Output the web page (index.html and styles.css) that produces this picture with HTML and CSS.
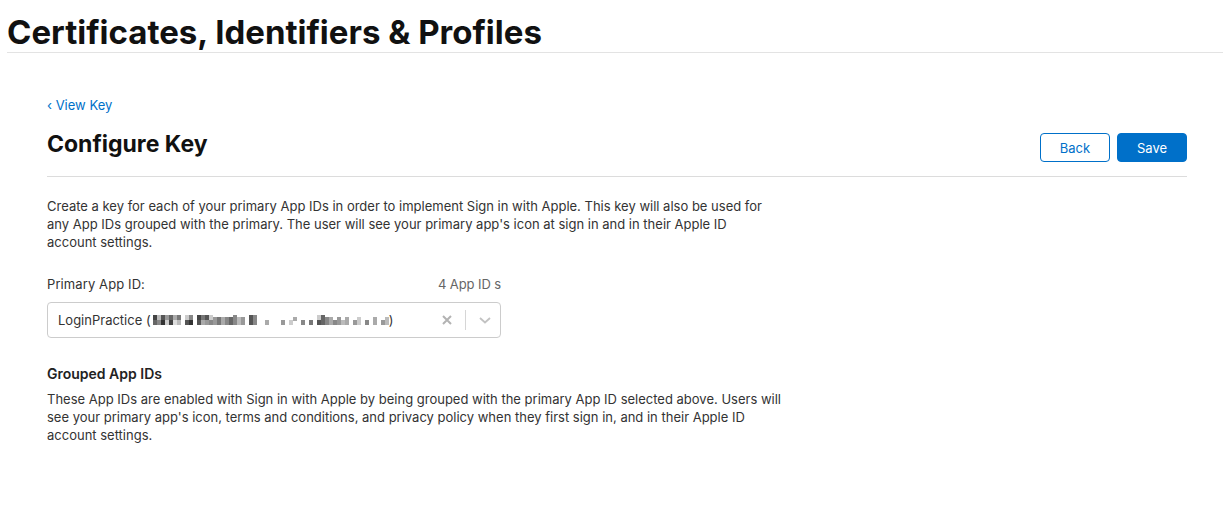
FILE: index.html
```html
<!DOCTYPE html>
<html lang="en">
<head>
<meta charset="utf-8">
<title>Configure Key</title>
<link rel="stylesheet" href="styles.css">
</head>
<body>
<header class="topbar">
  <h1 class="site-title">Certificates, Identifiers &amp; Profiles</h1>
</header>
<main class="main">
  <a class="crumb" href="#">&lsaquo; View Key</a>
  <div class="title-row">
    <h2 class="page-title">Configure Key</h2>
    <div class="actions">
      <button class="btn btn-outline">Back</button>
      <button class="btn btn-primary">Save</button>
    </div>
  </div>
  <section class="content">
    <p class="desc">Create a key for each of your primary App IDs in order to implement Sign in with Apple. This key will also be used for any App IDs grouped with the primary. The user will see your primary app's icon at sign in and in their Apple ID account settings.</p>
    <div class="field">
      <div class="field-head">
        <label class="field-label">Primary App ID:</label>
        <span class="field-count">4 App ID s</span>
      </div>
      <div class="select">
        <span class="select-value">LoginPractice (<svg class="mosaic" width="236" height="12" viewBox="0 0 236 12">
          <rect x="0" y="1" width="4" height="5" fill="#444"/><rect x="0" y="6" width="4" height="5" fill="#666"/>
          <rect x="4" y="1" width="4" height="5" fill="#bbb"/><rect x="4" y="6" width="4" height="5" fill="#888"/>
          <rect x="8" y="1" width="4" height="5" fill="#555"/><rect x="8" y="6" width="4" height="5" fill="#333"/>
          <rect x="12" y="1" width="4" height="5" fill="#999"/><rect x="12" y="6" width="4" height="5" fill="#ccc"/>
          <rect x="16" y="1" width="4" height="5" fill="#666"/><rect x="16" y="6" width="4" height="5" fill="#444"/>
          <rect x="20" y="1" width="4" height="5" fill="#aaa"/><rect x="20" y="6" width="4" height="5" fill="#ddd"/>
          <rect x="24" y="1" width="4" height="5" fill="#777"/><rect x="24" y="6" width="4" height="5" fill="#bbb"/>
          <rect x="32" y="1" width="4" height="5" fill="#ccc"/><rect x="32" y="6" width="4" height="5" fill="#555"/>
          <rect x="36" y="1" width="4" height="5" fill="#888"/><rect x="36" y="6" width="4" height="5" fill="#333"/>
          <rect x="44" y="1" width="4" height="5" fill="#444"/><rect x="44" y="6" width="4" height="5" fill="#555"/>
          <rect x="48" y="1" width="4" height="5" fill="#777"/><rect x="48" y="6" width="4" height="5" fill="#aaa"/>
          <rect x="52" y="1" width="4" height="5" fill="#555"/><rect x="52" y="6" width="4" height="5" fill="#999"/>
          <rect x="56" y="1" width="4" height="5" fill="#ccc"/><rect x="56" y="6" width="4" height="5" fill="#888"/>
          <rect x="60" y="3" width="4" height="8" fill="#999"/><rect x="64" y="3" width="4" height="8" fill="#777"/>
          <rect x="68" y="3" width="4" height="8" fill="#aaa"/><rect x="72" y="3" width="4" height="8" fill="#888"/>
          <rect x="76" y="3" width="4" height="8" fill="#666"/><rect x="80" y="1" width="4" height="10" fill="#888"/>
          <rect x="84" y="3" width="4" height="8" fill="#bbb"/><rect x="88" y="3" width="4" height="8" fill="#999"/>
          <rect x="96" y="1" width="4" height="10" fill="#555"/><rect x="100" y="1" width="4" height="10" fill="#888"/>
          <rect x="112" y="6" width="4" height="5" fill="#aaa"/>
          <rect x="128" y="6" width="4" height="5" fill="#999"/><rect x="140" y="3" width="4" height="4" fill="#aaa"/>
          <rect x="136" y="6" width="4" height="5" fill="#ccc"/><rect x="148" y="6" width="4" height="5" fill="#888"/>
          <rect x="156" y="6" width="4" height="5" fill="#777"/><rect x="164" y="1" width="4" height="5" fill="#ccc"/>
          <rect x="164" y="6" width="4" height="5" fill="#555"/><rect x="168" y="1" width="4" height="10" fill="#666"/>
          <rect x="172" y="3" width="4" height="8" fill="#888"/><rect x="176" y="3" width="4" height="8" fill="#aaa"/>
          <rect x="180" y="6" width="4" height="5" fill="#888"/><rect x="184" y="3" width="4" height="8" fill="#999"/>
          <rect x="188" y="6" width="4" height="5" fill="#bbb"/><rect x="192" y="3" width="4" height="8" fill="#aaa"/>
          <rect x="200" y="6" width="4" height="5" fill="#999"/><rect x="204" y="3" width="4" height="8" fill="#ccc"/>
          <rect x="212" y="6" width="4" height="5" fill="#888"/><rect x="220" y="3" width="4" height="8" fill="#aaa"/>
          <rect x="228" y="6" width="4" height="5" fill="#999"/><rect x="232" y="3" width="4" height="8" fill="#bbb"/>
        </svg>)</span>
        <span class="select-controls">
          <svg class="clear" width="12" height="12" viewBox="0 0 12 12"><path d="M2 2 L10 10 M10 2 L2 10" stroke="#b3b3b3" stroke-width="2" fill="none"/></svg>
          <span class="sep"></span>
          <svg class="chev" width="14" height="10" viewBox="0 0 14 10"><path d="M2 3 L7 7.5 L12 3" stroke="#c2c2c2" stroke-width="1.8" fill="none"/></svg>
        </span>
      </div>
    </div>
    <h3 class="sub-title">Grouped App IDs</h3>
    <p class="desc desc-wide">These App IDs are enabled with Sign in with Apple by being grouped with the primary App ID selected above. Users will see your primary app's icon, terms and conditions, and privacy policy when they first sign in, and in their Apple ID account settings.</p>
  </section>
</main>
</body>
</html>
```

FILE: styles.css
```css
* { box-sizing: border-box; }
body {
  margin: 0;
  font-family: Inter, "Noto Sans", sans-serif;
  color: #1d1d1f;
  background: #fff;
}
.topbar {
  margin-left: 7px;
  border-bottom: 1px solid #e3e3e3;
  padding-top: 12px;
  height: 53px;
}
.site-title {
  margin: 0;
  font-size: 33px;
  line-height: 40px;
  font-weight: 700;
  letter-spacing: 0;
  color: #111;
}
.main {
  padding: 43px 36px 0 47px;
}
.crumb {
  display: block;
  width: max-content;
  color: #0070c9;
  text-decoration: none;
  font-size: 13px;
  line-height: 18px;
}
.title-row {
  display: flex;
  justify-content: space-between;
  align-items: flex-start;
  border-bottom: 1px solid #dcdcdc;
  padding: 15px 0 14px;
}
.page-title {
  margin: 0;
  font-size: 23px;
  line-height: 30px;
  font-weight: 700;
  color: #111;
}
.actions {
  display: flex;
  gap: 7px;
  margin-top: 4px;
}
.btn {
  width: 70px;
  height: 29px;
  border-radius: 4px;
  font-family: inherit;
  font-size: 13px;
  border: 1px solid #0070c9;
  cursor: pointer;
}
.btn-outline { background: #fff; color: #0070c9; }
.btn-primary { background: #0070c9; color: #fff; }
.content {
  padding-top: 20px;
  max-width: 730px;
}
.desc {
  margin: 0;
  font-size: 13px;
  line-height: 18px;
  letter-spacing: 0;
  color: #333;
}
.desc-wide {
  width: 742px;
}
.field {
  width: 454px;
  margin-top: 24px;
}
.field-head {
  display: flex;
  justify-content: space-between;
  align-items: baseline;
  font-size: 13px;
  line-height: 18px;
  letter-spacing: 0.1px;
  margin-bottom: 9px;
}
.field-label { color: #333; }
.field-count { color: #666; letter-spacing: -0.1px; }
.select {
  display: flex;
  align-items: center;
  justify-content: space-between;
  height: 36px;
  border: 1px solid #cccccc;
  border-radius: 4px;
  padding: 0 8px 0 10px;
  font-size: 13px;
  color: #333;
}
.select-value { display: flex; align-items: center; }
.mosaic { margin: 0 0 0 2px; }
.select-controls {
  display: flex;
  align-items: center;
  gap: 12px;
}
.sep {
  width: 1px;
  height: 20px;
  background: #d6d6d6;
}
.sub-title {
  margin: 26px 0 6px;
  font-size: 14px;
  line-height: 20px;
  font-weight: 600;
  color: #222;
}
```
